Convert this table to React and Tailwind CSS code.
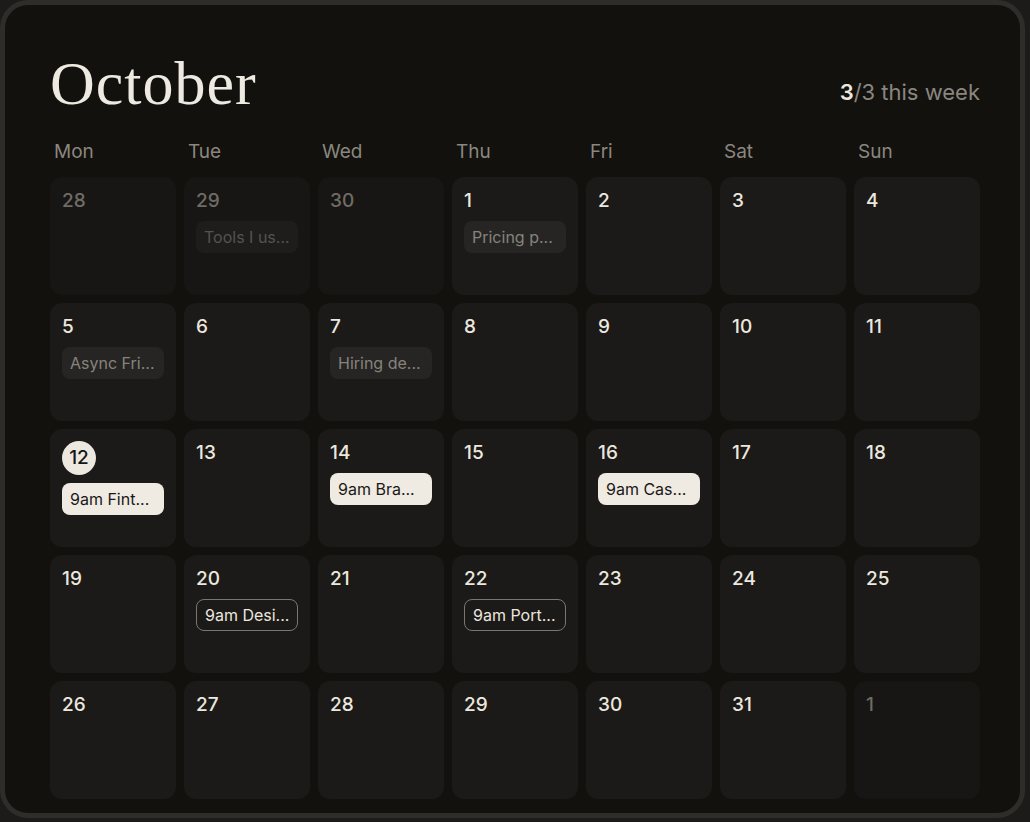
import React from 'react';

const days = ['Mon', 'Tue', 'Wed', 'Thu', 'Fri', 'Sat', 'Sun'];

// kinds: ghost (other month), muted (past), solid, outline
const cells = [
  { d: 28, out: true }, { d: 29, out: true, ev: { t: 'Tools I us...', k: 'ghost' } }, { d: 30, out: true },
  { d: 1, ev: { t: 'Pricing p...', k: 'muted' } }, { d: 2 }, { d: 3 }, { d: 4 },
  { d: 5, ev: { t: 'Async Fri...', k: 'muted' } }, { d: 6 }, { d: 7, ev: { t: 'Hiring de...', k: 'muted' } },
  { d: 8 }, { d: 9 }, { d: 10 }, { d: 11 },
  { d: 12, today: true, ev: { t: '9am Fint...', k: 'solid' } }, { d: 13 }, { d: 14, ev: { t: '9am Bra...', k: 'solid' } },
  { d: 15 }, { d: 16, ev: { t: '9am Cas...', k: 'solid' } }, { d: 17 }, { d: 18 },
  { d: 19 }, { d: 20, ev: { t: '9am Desi...', k: 'outline' } }, { d: 21 }, { d: 22, ev: { t: '9am Port...', k: 'outline' } },
  { d: 23 }, { d: 24 }, { d: 25 },
  { d: 26 }, { d: 27 }, { d: 28 }, { d: 29 }, { d: 30 }, { d: 31 }, { d: 1, out: true },
];

const pillStyles = {
  ghost: 'bg-[#1e1d1b] text-[#55534f]',
  muted: 'bg-[#262523] text-[#86837c]',
  solid: 'bg-[#efebe3] text-[#1a1917]',
  outline: 'border-[1.5px] border-[#7a7770] text-[#ebe7df]',
};

const DayCell = ({ cell }) => (
  <div className={`h-[118px] rounded-xl px-3 pt-3 ${cell.out ? 'bg-[#171614]' : 'bg-[#1b1a18]'}`}>
    {cell.today ? (
      <div className="w-[34px] h-[34px] rounded-full bg-[#ece8e0] text-[#151412] flex items-center justify-center text-[19px] font-medium">
        {cell.d}
      </div>
    ) : (
      <div className={`h-6 leading-6 text-[19px] font-medium ${cell.out ? 'text-[#6f6c66]' : 'text-[#ece8df]'}`}>
        {cell.d}
      </div>
    )}
    {cell.ev && (
      <div className={`mt-2 w-[102px] h-8 rounded-lg flex items-center px-2 text-[16px] leading-none whitespace-nowrap ${pillStyles[cell.ev.k]}`}>
        {cell.ev.t}
      </div>
    )}
  </div>
);

export default function App() {
  return (
    <div className="w-[1030px] h-[822px] bg-[#1c1b19]" style={{ fontFamily: 'Inter, "Noto Sans", sans-serif' }}>
      <div className="w-[1025px] h-[818px] rounded-[28px] border-[5px] border-[#2e2d2a] bg-[#12110e] pl-[45px] pr-[40px] pt-[45px]">
        <div className="flex items-end justify-between">
          <h1
            className="text-[62px] leading-[62px] pt-[2px] -mb-[2px] text-[#eeeae2] tracking-[1px]"
            style={{ fontFamily: '"Liberation Serif", "DejaVu Serif", serif' }}
          >
            October
          </h1>
          <div className="text-[22px] text-[#8a867e] pb-[3px]">
            <span className="text-[#ece8df] font-semibold">3</span>/3 this week
          </div>
        </div>
        <div className="grid grid-cols-7 gap-2 mt-[28px]">
          {days.map((d) => (
            <div key={d} className="pl-1 text-[19px] text-[#8a877f] leading-6">{d}</div>
          ))}
        </div>
        <div className="grid grid-cols-7 gap-2 mt-[13px]">
          {cells.map((c, i) => (
            <DayCell key={i} cell={c} />
          ))}
        </div>
      </div>
    </div>
  );
}
